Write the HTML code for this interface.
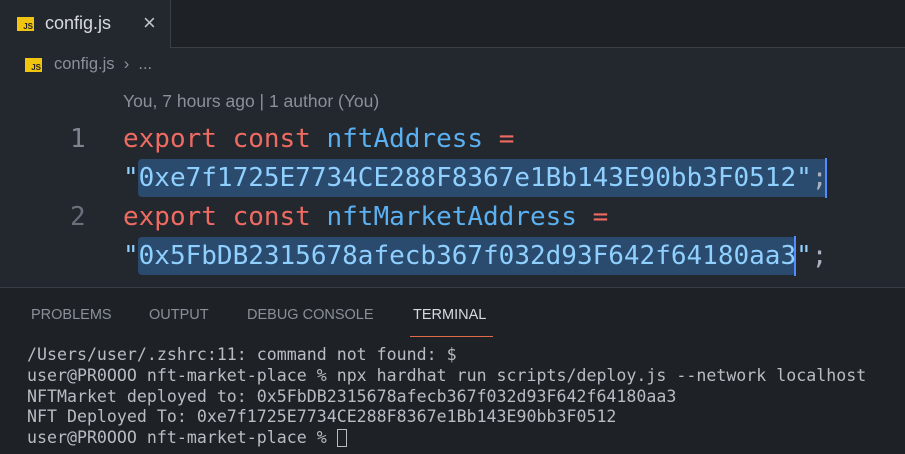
<!DOCTYPE html>
<html><head><style>
*{margin:0;padding:0;box-sizing:border-box}
body{width:905px;height:454px;background:#23272e;overflow:hidden;position:relative;font-family:"Liberation Sans",sans-serif}
.abs{position:absolute;white-space:pre}
.tabbar{position:absolute;left:0;top:0;width:905px;height:48px;background:#1e2227}
.tab{position:absolute;left:0;top:0;width:171px;height:48px;background:#23272e;border-right:1px solid #3a3f47}
.tabline{position:absolute;left:171px;top:47px;width:734px;height:1px;background:#3a3f47}
.js{position:absolute;width:17px;height:14px;background:#f1c40f;color:#222;font:bold 8px "Liberation Sans",sans-serif;text-align:right;padding:5px 1px 0 0;line-height:9px}
.code{font-family:"DejaVu Sans Mono",monospace;font-size:26px;line-height:39px}
.k{color:#ef6b62}.v{color:#5ab0f0}.s{color:#8fd0ff}.p{color:#abb2bf}
.sel{position:absolute;background:#2a4a6e;border-radius:4px}
.panel{position:absolute;left:0;top:287px;width:905px;height:167px;background:#1e2227;border-top:1px solid #3a3f47}
.pt{position:absolute;top:19px;font-size:14.5px;color:#8a9099}
.term{position:absolute;left:27px;top:57px;font-family:"DejaVu Sans Mono",monospace;font-size:16.6px;line-height:20.8px;color:#b8bcc3;white-space:pre}
</style></head><body>
<div class="tabbar"></div>
<div class="tab"></div>
<div class="tabline"></div>
<div class="js" style="left:17px;top:17px">JS</div>
<div class="abs" style="left:45px;top:13px;font-size:18px;color:#d7dae0">config.js</div>
<div class="abs" style="left:143px;top:10px;font-size:22px;color:#c0c4cb">×</div>
<div class="js" style="left:25px;top:58px">JS</div>
<div class="abs" style="left:54px;top:55px;font-size:16.5px;color:#8b9099">config.js  ›  ...</div>
<div class="abs" style="left:123px;top:91px;font-size:17.5px;color:#8b9099">You, 7 hours ago | 1 author (You)</div>

<div class="sel" style="left:138px;top:159px;width:689px;height:38px"></div>
<div class="sel" style="left:138px;top:237px;width:658px;height:38px"></div>
<div style="position:absolute;left:825px;top:158px;width:2px;height:40px;background:#528bff"></div>
<div style="position:absolute;left:794px;top:236px;width:2px;height:40px;background:#528bff"></div>

<div class="abs code" style="left:70px;top:120px;color:#7f858f">1</div>
<div class="abs code" style="left:70px;top:198px;color:#6b717b">2</div>
<div class="abs code" style="left:123px;top:120px"><span class="k">export const </span><span class="v">nftAddress</span> <span class="k">=</span>
<span class="s">"0xe7f1725E7734CE288F8367e1Bb143E90bb3F0512"</span><span class="p">;</span>
<span class="k">export const </span><span class="v">nftMarketAddress</span> <span class="k">=</span>
<span class="s">"0x5FbDB2315678afecb367f032d93F642f64180aa3"</span><span class="p">;</span></div>

<div class="panel">
<div class="pt" style="left:31px">PROBLEMS</div>
<div class="pt" style="left:149px">OUTPUT</div>
<div class="pt" style="left:247px">DEBUG CONSOLE</div>
<div class="pt" style="left:413px;color:#d7dae0">TERMINAL</div>
<div style="position:absolute;left:410px;top:48px;width:83px;height:1px;background:#e2694a"></div>
<div class="term">/Users/user/.zshrc:11: command not found: $
user@PR0OOO nft-market-place % npx hardhat run scripts/deploy.js --network localhost
NFTMarket deployed to: 0x5FbDB2315678afecb367f032d93F642f64180aa3
NFT Deployed To: 0xe7f1725E7734CE288F8367e1Bb143E90bb3F0512
user@PR0OOO nft-market-place % <span style="display:inline-block;width:10px;height:18px;border:1px solid #b8bcc3;vertical-align:-4px"></span></div>
</div>
</body></html>
